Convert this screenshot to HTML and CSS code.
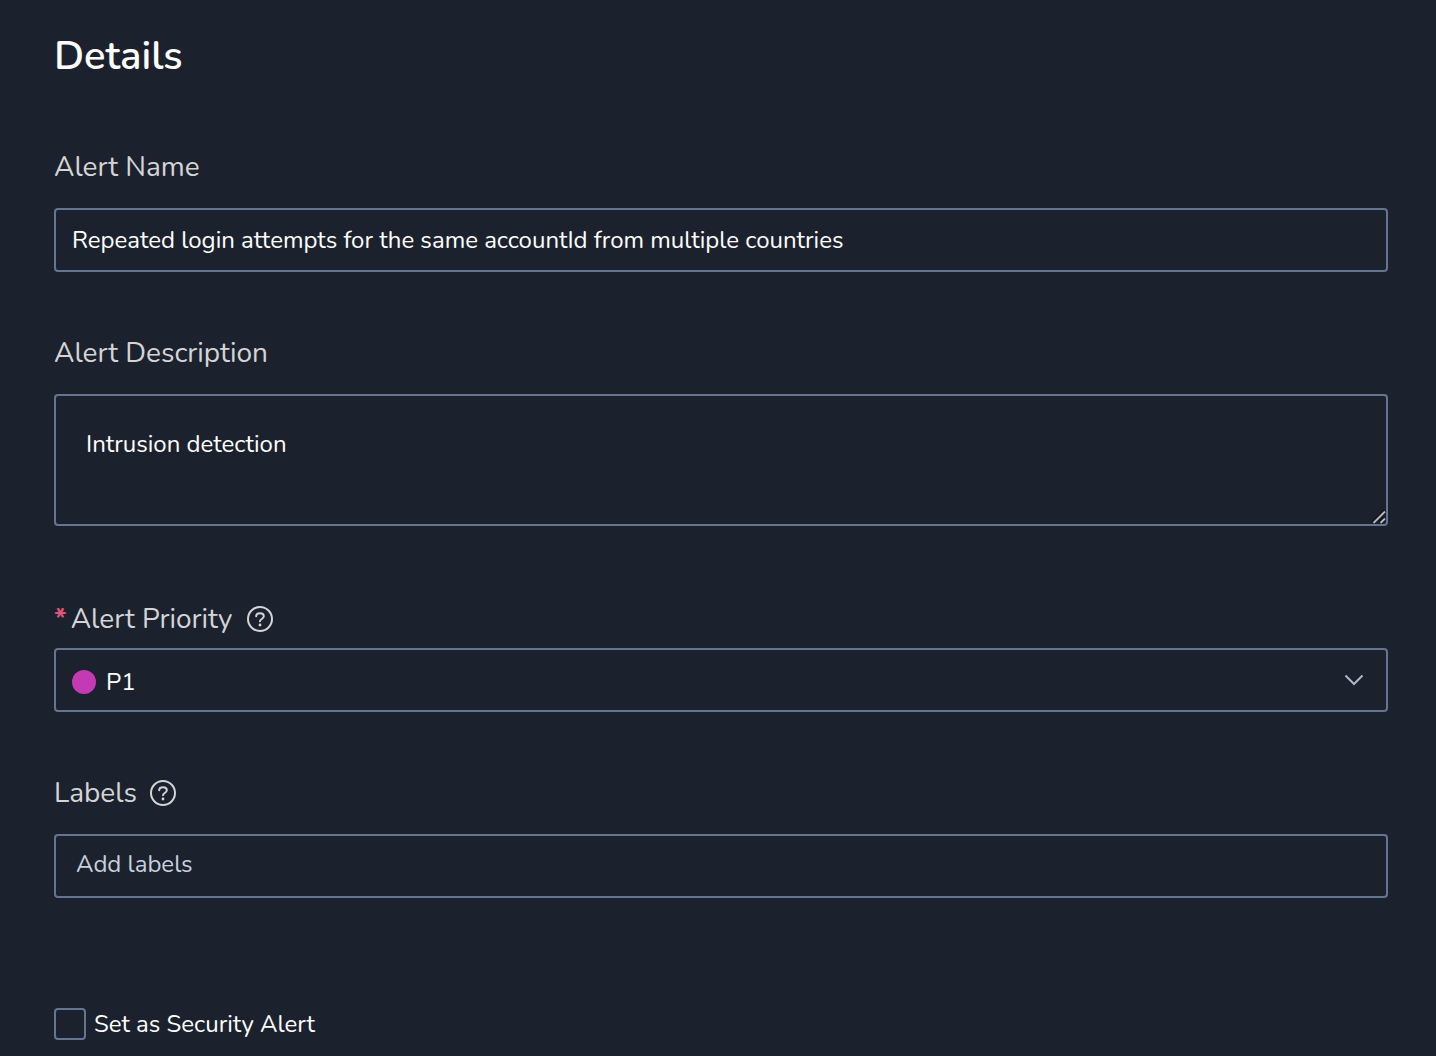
FILE: index.html
```html
<!DOCTYPE html>
<html lang="en">
<head>
    <meta charset="UTF-8">
    <meta name="viewport" content="width=device-width, initial-scale=1.0">
    <title>Alert Details</title>
    <link rel="stylesheet" href="styles.css">
</head>
<body>
    <form class="details">
        <h1>Details</h1>

        <div class="field">
            <label for="alertName">Alert Name</label>
            <input type="text" class="control" id="alertName" value="Repeated login attempts for the same accountId from multiple countries">
        </div>

        <div class="field">
            <label for="alertDescription">Alert Description</label>
            <textarea class="control description" id="alertDescription">Intrusion detection</textarea>
        </div>

        <div class="field priority-field">
            <div class="label-row priority-label">
                <label for="alertPriority"><span class="required">*</span>Alert Priority</label>
                <button type="button" class="help" aria-label="About alert priority">
                    <svg width="28" height="28" viewBox="0 0 28 28" fill="none" stroke="currentColor" stroke-width="2" stroke-linecap="round">
                        <circle cx="14" cy="14" r="12"></circle>
                        <path d="M10.2 11.3C10.2 9.3 11.8 8.2 14 8.2S17.8 9.4 17.8 11.3C17.8 14 14 13.9 14 16.2"></path>
                        <circle cx="14" cy="20" r="1.4" fill="currentColor" stroke="none"></circle>
                    </svg>
                </button>
            </div>
            <div class="control select-box">
                <span class="priority-dot"></span>
                <select id="alertPriority">
                    <option selected>P1</option>
                    <option>P2</option>
                    <option>P3</option>
                    <option>P4</option>
                    <option>P5</option>
                </select>
                <svg class="chevron" width="20" height="12" viewBox="0 0 20 12" fill="none" stroke="currentColor" stroke-width="2">
                    <path d="M1.5 1.5l8.5 8.5 8.5-8.5"></path>
                </svg>
            </div>
        </div>

        <div class="field">
            <div class="label-row">
                <label for="labels">Labels</label>
                <button type="button" class="help" aria-label="About labels">
                    <svg width="28" height="28" viewBox="0 0 28 28" fill="none" stroke="currentColor" stroke-width="2" stroke-linecap="round">
                        <circle cx="14" cy="14" r="12"></circle>
                        <path d="M10.2 11.3C10.2 9.3 11.8 8.2 14 8.2S17.8 9.4 17.8 11.3C17.8 14 14 13.9 14 16.2"></path>
                        <circle cx="14" cy="20" r="1.4" fill="currentColor" stroke="none"></circle>
                    </svg>
                </button>
            </div>
            <input type="text" class="control labels-input" id="labels" placeholder="Add labels">
        </div>

        <div class="check-row">
            <input type="checkbox" id="securityAlert">
            <label for="securityAlert">Set as Security Alert</label>
        </div>
    </form>
</body>
</html>
```
FILE: styles.css
```css
* {
    margin: 0;
    padding: 0;
    box-sizing: border-box;
}

body {
    background-color: #1c222d;
    color: #ffffff;
    font-family: Nunito, "Noto Sans", sans-serif;
    font-size: 24px;
}

input,
textarea,
select,
button {
    font: inherit;
    color: inherit;
}

.details {
    padding: 28px 48px 16px 54px;
}

h1 {
    font-size: 40px;
    font-weight: 600;
    line-height: 56px;
    margin-bottom: 62px;
}

.field {
    display: flex;
    flex-direction: column;
    gap: 20px;
    margin-bottom: 60px;
}

.field label {
    color: #d4d4d6;
    font-size: 28px;
    line-height: 42px;
}

.label-row {
    display: flex;
    align-items: center;
    gap: 12px;
}

.priority-label {
    gap: 14px;
}

.control {
    width: 100%;
    height: 64px;
    padding: 0 16px;
    border: 2px solid #647491;
    border-radius: 4px;
    background-color: transparent;
    outline: none;
}

.control:focus,
.select-box:focus-within {
    border-color: #8b9bc0;
}

.description {
    display: block;
    height: 132px;
    padding: 32px 30px;
    line-height: 32px;
    resize: vertical;
}

.description::-webkit-scrollbar {
    width: 16px;
    height: 16px;
}

/* Two diagonal grip lines */
.description::-webkit-resizer {
    background: url("data:image/svg+xml,%3Csvg xmlns='http://www.w3.org/2000/svg' width='16' height='16' viewBox='0 0 16 16' fill='none'%3E%3Cpath d='M2 14L14 2M9 14L14 9' stroke='%230d1017' stroke-width='4'/%3E%3Cpath d='M2.5 14L14 2.5M9.5 14L14 9.5' stroke='%23b8b8b8' stroke-width='2'/%3E%3C/svg%3E") no-repeat;
}

.help {
    display: flex;
    border: none;
    background: none;
    color: #d4d4d6;
    cursor: pointer;
}

/* Priority */
.priority-field {
    gap: 8px;
    margin-top: 72px;
}

.required {
    color: #e0567a;
    font-weight: 700;
    margin-right: 4px;
}

.select-box {
    position: relative;
    display: flex;
    align-items: center;
    gap: 10px;
    padding-top: 4px;
}

.priority-dot {
    width: 24px;
    height: 24px;
    border-radius: 50%;
    background-color: #c43ab5;
}

select {
    flex: 1;
    height: 100%;
    border: none;
    outline: none;
    background-color: transparent;
    appearance: none;
}

select option {
    background-color: #1c222d;
}

.chevron {
    position: absolute;
    top: 24px;
    right: 22px;
    color: #b0b6c8;
    pointer-events: none;
}

/* Labels */
.labels-input {
    padding: 0 20px 4px;
}

.labels-input::placeholder {
    color: #c8d0df;
    opacity: 1;
}

.check-row {
    display: flex;
    align-items: center;
    gap: 8px;
    margin-top: 110px;
}

.check-row input {
    width: 32px;
    height: 32px;
    border: 2px solid #647491;
    border-radius: 4px;
    appearance: none;
}

.check-row input:checked {
    background-color: #647491;
}
```
